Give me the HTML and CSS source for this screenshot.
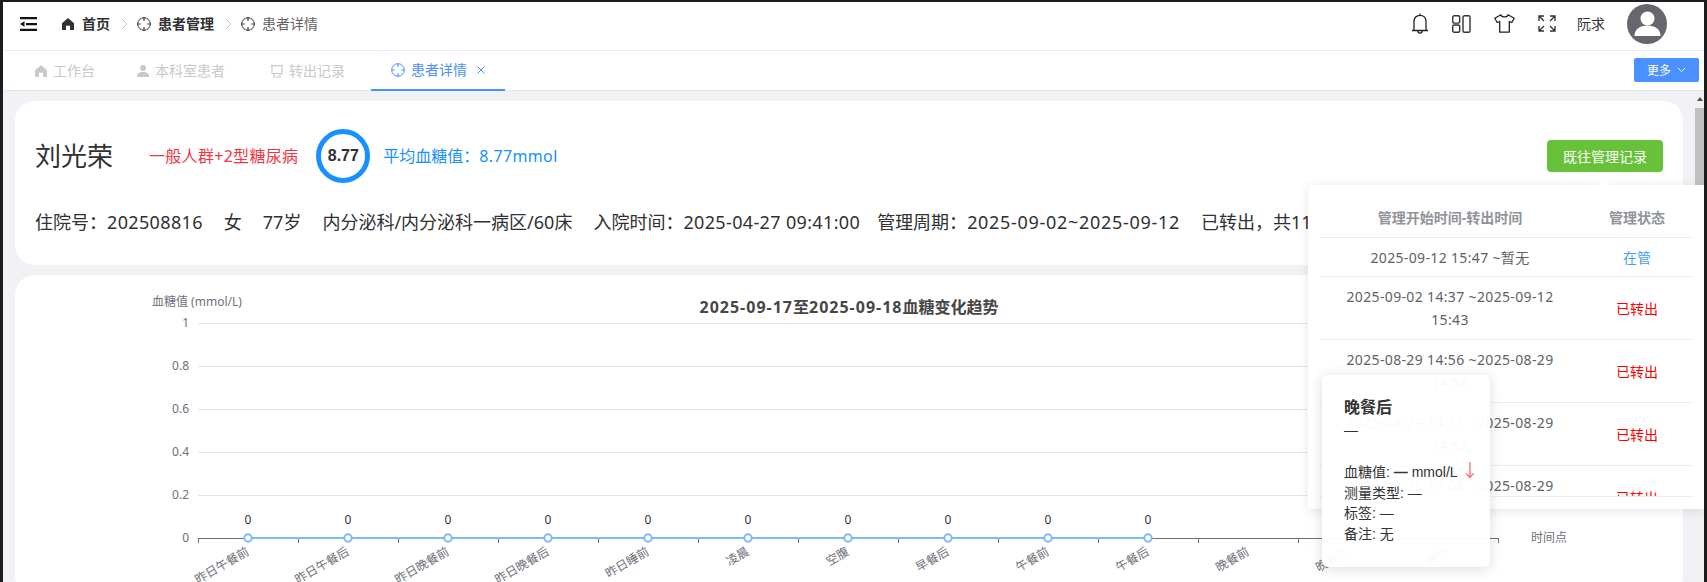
FILE: index.html
```html
<!DOCTYPE html>
<html lang="zh-CN">
<head>
    <meta charset="UTF-8">
    <title>患者详情</title>
    <link rel="stylesheet" href="styles.css">
</head>
<body>
<svg class="defs" width="0" height="0">
    <symbol id="i-target" viewBox="0 0 14 14">
        <circle cx="7" cy="7" r="6.3" fill="none" stroke="currentColor" stroke-width="1"/>
        <path d="M7 .7v3M7 10.3v3M.7 7h3M10.3 7h3" fill="none" stroke="currentColor" stroke-width="1.2"/>
    </symbol>
    <symbol id="i-home" viewBox="0 0 12 12">
        <path d="M6 0 12 5.2V12H8V7.8H4V12H0V5.2Z" fill="currentColor"/>
    </symbol>
    <symbol id="i-user" viewBox="0 0 12 12">
        <circle cx="6" cy="3" r="3" fill="currentColor"/>
        <path d="M0 12c0-3.4 2-5 6-5s6 1.600 6 5Z" fill="currentColor"/>
    </symbol>
    <symbol id="i-cart" viewBox="0 0 12 13">
        <path d="M0 .6h12M1 .6V8.500h10V.6M3 8.500v2.500M9 8.500v2.500M2 12h8" fill="none" stroke="currentColor" stroke-width="1.200"/>
    </symbol>
</svg>
<div class="app">
    <div class="topbar">
        <svg class="hamburger" width="17" height="14" viewBox="0 0 17 14">
            <path d="M0 0h17v2.200H0zM6 6h11v2.200H6zM0 11.800h17V14H0zM4.500 4.300v5.400L0 7z" fill="#111"/>
        </svg>
        <div class="crumbs">
            <svg class="crumb-icon home" width="12" height="12"><use href="#i-home"/></svg>
            <span class="crumb strong">首页</span>
            <svg class="chevron" width="7" height="12" viewBox="0 0 7 12"><path d="M1 1l5 5-5 5" fill="none" stroke="#c0c4cc" stroke-width="1"/></svg>
            <svg class="crumb-icon" width="14" height="14"><use href="#i-target"/></svg>
            <span class="crumb strong">患者管理</span>
            <svg class="chevron" width="7" height="12" viewBox="0 0 7 12"><path d="M1 1l5 5-5 5" fill="none" stroke="#c0c4cc" stroke-width="1"/></svg>
            <svg class="crumb-icon" width="14" height="14"><use href="#i-target"/></svg>
            <span class="crumb">患者详情</span>
        </div>
        <div class="tools">
            <svg class="tool bell" width="18" height="21" viewBox="0 0 18 21">
                <path d="M1 17.500h16M3 17.500V8.500C3 4.800 5.500 2.300 9 2.300s6 2.500 6 6.200v9M9 .5v1.800M6.800 17.800c0 3 4.400 3 4.400 0" fill="none" stroke="#222" stroke-width="1.300"/>
            </svg>
            <svg class="tool grid" width="19" height="18" viewBox="0 0 19 18">
                <g fill="none" stroke="#333" stroke-width="1.400"><rect x=".7" y=".7" width="7" height="7.400" rx="1.500"/><rect x=".7" y="10" width="7" height="7.300" rx="1.500"/><rect x="11" y=".7" width="7" height="16.600" rx="1.500"/></g>
            </svg>
            <svg class="tool shirt" width="21" height="19" viewBox="0 0 21 19">
                <path d="M7 .8 .8 4.200l2.400 4.300 2.500-1V18.200h9.600V7.500l2.500 1 2.400-4.300L14 .8c-.6 2.800-6.400 2.800-7 0Z" fill="none" stroke="#222" stroke-width="1.300" stroke-linejoin="round"/>
            </svg>
            <svg class="tool full" width="18" height="17" viewBox="0 0 18 17">
                <path d="M1 6V1h5M1 1l5 5M12 1h5v5M17 1l-5 5M1 11v5h5M1 16l5-5M17 11v5h-5M17 16l-5-5" fill="none" stroke="#333" stroke-width="1.300"/>
            </svg>
            <span class="username">阮求</span>
            <svg class="avatar" width="40" height="40" viewBox="0 0 40 40">
                <circle cx="20" cy="20" r="20" fill="#65676c"/>
                <circle cx="20.500" cy="14.500" r="7" fill="#fff"/>
                <path d="M7.500 32c0-7 5.500-10.500 13-10.500s13 3.500 13 10.500Z" fill="#fff"/>
            </svg>
        </div>
    </div>
    <div class="tabbar">
        <div class="tab">
            <svg width="12" height="12"><use href="#i-home"/></svg>
            <span>工作台</span>
        </div>
        <div class="tab">
            <svg width="12" height="12"><use href="#i-user"/></svg>
            <span>本科室患者</span>
        </div>
        <div class="tab tab-spaced">
            <svg width="12" height="13"><use href="#i-cart"/></svg>
            <span>转出记录</span>
        </div>
        <div class="tab tab-spaced active">
            <svg width="14" height="14"><use href="#i-target"/></svg>
            <span>患者详情</span>
            <svg class="tab-close" width="8" height="8" viewBox="0 0 8 8"><path d="M.5.5l7 7M7.500.5l-7 7" fill="none" stroke="currentColor" stroke-width="1"/></svg>
        </div>
        <div class="more">更多
            <svg width="9" height="6" viewBox="0 0 9 6"><path d="M.7.8l3.800 3.800L8.300.8" fill="none" stroke="#fff" stroke-width="1"/></svg>
        </div>
    </div>
    <div class="main">
        <div class="content">
            <div class="card card-patient">
                <div class="patient-top">
                    <div class="patient-name">刘光荣</div>
                    <div class="patient-tag">一般人群+2型糖尿病</div>
                    <div class="ring">8.77</div>
                    <div class="avg">平均血糖值&#65306;<span class="num">8.77mmol</span></div>
                    <div class="btn-green">既往管理记录</div>
                </div>
                <div class="patient-info">
                    <span>住院号&#65306;<span class="num">202508816</span></span>
                    <span>女</span>
                    <span>77岁</span>
                    <span>内分泌科/内分泌科一病区/60床</span>
                    <span>入院时间&#65306;<span class="num">2025-04-27 09:41:00</span></span>
                    <span class="tight">管理周期&#65306;<span class="num wide">2025-09-02~2025-09-12</span></span>
                    <span>已转出&#65292;共11次</span>
                </div>
            </div>
            <div class="card card-chart">
                <svg class="chart" width="1668" height="320" viewBox="15 275 1668 320">
                    <text class="chart-title" x="849" y="313" text-anchor="middle"><tspan class="chart-date">2025-09-17</tspan>至<tspan class="chart-date">2025-09-18</tspan>血糖变化趋势</text>
                    <text class="axis-text" x="152" y="306">血糖值 (mmol/L)</text>
                    <g stroke="#e0e6f1" stroke-width="1">
                        <path d="M198 323.500H1500M198 366.500H1500M198 409.500H1500M198 452.500H1500M198 495.500H1500"/>
                    </g>
                    <g class="axis-text" text-anchor="end">
                        <text x="189" y="327">1</text>
                        <text x="189" y="370">0.8</text>
                        <text x="189" y="413">0.6</text>
                        <text x="189" y="456">0.4</text>
                        <text x="189" y="499">0.2</text>
                        <text x="189" y="542">0</text>
                    </g>
                    <path d="M198 538.500H1498M198.500 538V543M298.500 538V543M398.500 538V543M498.500 538V543M598.500 538V543M698.500 538V543M798.500 538V543M898.500 538V543M998.500 538V543M1098.500 538V543M1198.500 538V543M1298.500 538V543M1398.500 538V543M1498.500 538V543" stroke="#6e7079" fill="none"/>
                    <path d="M248 538H1148" stroke="#7cb9ff" stroke-width="2"/>
                    <g fill="#fff" stroke="#7cb9ff" stroke-width="2">
                        <circle cx="248" cy="538" r="3.700"/><circle cx="348" cy="538" r="3.700"/><circle cx="448" cy="538" r="3.700"/><circle cx="548" cy="538" r="3.700"/><circle cx="648" cy="538" r="3.700"/>
                        <circle cx="748" cy="538" r="3.700"/><circle cx="848" cy="538" r="3.700"/><circle cx="948" cy="538" r="3.700"/><circle cx="1048" cy="538" r="3.700"/><circle cx="1148" cy="538" r="3.700"/>
                    </g>
                    <g class="value-text" text-anchor="middle">
                        <text x="248" y="524">0</text><text x="348" y="524">0</text><text x="448" y="524">0</text><text x="548" y="524">0</text><text x="648" y="524">0</text>
                        <text x="748" y="524">0</text><text x="848" y="524">0</text><text x="948" y="524">0</text><text x="1048" y="524">0</text><text x="1148" y="524">0</text>
                    </g>
                    <g class="axis-text" text-anchor="end">
                        <text transform="translate(250 554) rotate(-30)">昨日午餐前</text>
                        <text transform="translate(350 554) rotate(-30)">昨日午餐后</text>
                        <text transform="translate(450 554) rotate(-30)">昨日晚餐前</text>
                        <text transform="translate(550 554) rotate(-30)">昨日晚餐后</text>
                        <text transform="translate(650 554) rotate(-30)">昨日睡前</text>
                        <text transform="translate(750 554) rotate(-30)">凌晨</text>
                        <text transform="translate(850 554) rotate(-30)">空腹</text>
                        <text transform="translate(950 554) rotate(-30)">早餐后</text>
                        <text transform="translate(1050 554) rotate(-30)">午餐前</text>
                        <text transform="translate(1150 554) rotate(-30)">午餐后</text>
                        <text transform="translate(1250 554) rotate(-30)">晚餐前</text>
                        <text transform="translate(1350 554) rotate(-30)">晚餐后</text>
                        <text transform="translate(1450 554) rotate(-30)">睡前</text>
                    </g>
                    <text class="axis-text" x="1531" y="542">时间点</text>
                </svg>
            </div>
        </div>
        <div class="scrollbar">
            <div class="scroll-arrow"></div>
            <div class="scroll-thumb"></div>
        </div>

        <div class="records">
            <div class="records-arrow"></div>
            <div class="rec-row rec-head">
                <div class="rec-time">管理开始时间-转出时间</div>
                <div class="rec-state">管理状态</div>
            </div>
            <div class="rec-body">
                <div class="rec-row rec-first">
                    <div class="rec-time">2025-09-12 15:47 ~暂无</div>
                    <div class="rec-state on">在管</div>
                </div>
                <div class="rec-row">
                    <div class="rec-time">2025-09-02 14:37 ~2025-09-12 15:43</div>
                    <div class="rec-state off">已转出</div>
                </div>
                <div class="rec-row">
                    <div class="rec-time">2025-08-29 14:56 ~2025-08-29 14:56</div>
                    <div class="rec-state off">已转出</div>
                </div>
                <div class="rec-row">
                    <div class="rec-time">2025-08-29 14:55 ~2025-08-29 14:56</div>
                    <div class="rec-state off">已转出</div>
                </div>
                <div class="rec-row">
                    <div class="rec-time">2025-08-26 17:08 ~2025-08-29 14:55</div>
                    <div class="rec-state off">已转出</div>
                </div>
            </div>
        </div>

        <div class="tip">
            <div class="tip-title">晚餐后</div>
            <div class="tip-sub">—</div>
            <div class="tip-line">血糖值: <b>—</b> mmol/L <span class="tip-arrow">↓</span></div>
            <div class="tip-line">测量类型: —</div>
            <div class="tip-line">标签: —</div>
            <div class="tip-line">备注: 无</div>
        </div>
    </div>
</div>
</body>
</html>
```

FILE: styles.css
```css
* {
    box-sizing: border-box;
}

html, body {
    height: 100%;
    margin: 0;
}

body {
    padding: 2px 3px 0;
    background: #1d1d1f;
    font-family: "Noto Sans", "Noto Sans CJK SC", sans-serif;
    font-size: 14px;
    color: #303133;
    overflow: hidden;
}

svg {
    flex: none;
    display: block;
}

.defs {
    position: absolute;
}

.app {
    height: 100%;
    display: flex;
    flex-direction: column;
    background: #fff;
}

/* top bar */
.topbar {
    height: 49px;
    flex: none;
    padding: 0 0 5px 17px;
    display: flex;
    align-items: center;
    border-bottom: 1px solid #ebeef2;
}

.hamburger {
    margin-right: 25px;
}

.crumbs {
    display: flex;
    align-items: center;
    color: #303133;
    line-height: 20px;
}

.crumb-icon.home {
    margin-right: 8px;
}

.crumb-icon {
    margin-right: 7px;
}

.crumb {
    color: #606266;
}

.crumb.strong {
    color: #303133;
    font-weight: 700;
}

.chevron {
    margin: 0 9px 0 11px;
}

.tools {
    margin-left: auto;
    padding-right: 37px;
    display: flex;
    align-items: center;
}

.tool {
    margin-right: 23px;
}

.tool.full {
    margin-right: 21px;
}

.username {
    margin-right: 22px;
    line-height: 20px;
    color: #303133;
}

/* tabs */
.tabbar {
    height: 40px;
    flex: none;
    padding-left: 12px;
    display: flex;
    align-items: stretch;
    border-bottom: 1px solid #e4e7ed;
}

.tab {
    height: 40px;
    padding: 0 22px 0 20px;
    display: flex;
    align-items: center;
    gap: 6px;
    color: #c8c9cc;
    line-height: 20px;
}

.tab-spaced {
    margin-left: 4px;
}

.tab.active {
    padding-right: 20px;
    color: #4a90ff;
    border-bottom: 2px solid #4a90ff;
}

.tab-close {
    margin-left: 4px;
}

.more {
    width: 65px;
    height: 24px;
    margin: 7px 5px 0 auto;
    display: flex;
    align-items: center;
    justify-content: center;
    gap: 6px;
    background: #4a90ff;
    border-radius: 2px;
    color: #fff;
    font-size: 12px;
}

/* main */
.main {
    flex: 1;
    min-height: 0;
    position: relative;
    display: flex;
    background: #f0f2f5;
}

.content {
    flex: 1;
    min-width: 0;
    padding: 10px 12px 0;
    overflow: hidden;
}

.scrollbar {
    width: 9px;
    flex: none;
    background: #f1f1f1;
}

.scroll-arrow {
    height: 17px;
    position: relative;
}

.scroll-arrow::after {
    content: "";
    position: absolute;
    top: 6px;
    left: 2px;
    border: 3px solid transparent;
    border-bottom: 4px solid #505050;
    border-top: none;
}

.scroll-thumb {
    height: 170px;
    background: #c1c1c1;
}

.card {
    background: #fff;
    border-radius: 20px;
}

.card-patient {
    height: 164px;
    padding: 28px 20px 0 20px;
}

.card-chart {
    height: 320px;
    margin-top: 10px;
}

.patient-top {
    height: 54px;
    display: flex;
    align-items: center;
}

.patient-name {
    margin-right: 36px;
    font-size: 26px;
    line-height: 36px;
    color: #303133;
}

.patient-tag {
    margin-right: 18px;
    font-size: 16px;
    line-height: 24px;
    letter-spacing: 0.3px;
    color: #f5333f;
}

.ring {
    width: 54px;
    height: 54px;
    margin-right: 13px;
    display: flex;
    align-items: center;
    justify-content: center;
    border: 5px solid #1890ff;
    border-radius: 50%;
    font-family: "Liberation Sans", sans-serif;
    font-size: 16px;
    font-weight: 700;
    color: #303133;
}

.avg {
    font-size: 16px;
    line-height: 24px;
    color: #1890ff;
}

.btn-green {
    width: 116px;
    height: 32px;
    margin-left: auto;
    display: flex;
    align-items: center;
    justify-content: center;
    background: #67c23a;
    border-radius: 4px;
    color: #fff;
    font-size: 14px;
}

.patient-info {
    height: 24px;
    margin-top: 27px;
    display: flex;
    gap: 21px;
    font-size: 18px;
    line-height: 24px;
    color: #303133;
    white-space: nowrap;
}

.patient-info .tight {
    margin-left: -4px;
}

.num {
    letter-spacing: 0.35px;
}

.num.wide {
    letter-spacing: 0.7px;
}

/* chart */
.chart-title {
    font-size: 16px;
    font-weight: 700;
    fill: #464646;
}

.chart-date {
    letter-spacing: 1px;
}

.axis-text {
    font-size: 12px;
    fill: #6e7079;
}

.value-text {
    font-size: 12px;
    fill: #333;
}

/* records dropdown */
.records {
    position: absolute;
    left: 1305px;
    right: 0;
    top: 94px;
    height: 324px;
    padding: 0 10px 0 12px;
    background: #fff;
    border-radius: 4px 0 0 4px;
    box-shadow: 0 2px 12px rgba(0, 0, 0, 0.1);
    font-size: 14px;
}

.records-arrow {
    position: absolute;
    left: 291px;
    top: -5px;
    width: 0;
    height: 0;
    border: 6px solid transparent;
    border-top: none;
    border-bottom: 5px solid #fff;
}

.rec-row {
    min-height: 63px;
    display: flex;
    align-items: center;
    border-bottom: 1px solid #ebeef5;
    line-height: 23px;
    text-align: center;
    color: #606266;
}

.rec-head {
    min-height: 0;
    height: 53px;
    padding-top: 12px;
    font-weight: 700;
    color: #909399;
}

.rec-first {
    min-height: 39px;
}

.rec-time {
    width: 260px;
    padding: 0 22px;
    flex: none;
}

.rec-body .rec-time {
    letter-spacing: 0.35px;
}

.rec-state {
    flex: 1;
}

.rec-state.on {
    color: #409eff;
}

.rec-state.off {
    color: #f00;
}

.rec-body {
    height: 259px;
    overflow: hidden;
    border-bottom: 1px solid #ebeef5;
}

/* tooltip */
.tip {
    position: absolute;
    left: 1319px;
    top: 284px;
    width: 168px;
    height: 192px;
    padding: 21px 22px 0;
    background: rgba(255, 255, 255, 0.96);
    border-radius: 6px;
    box-shadow: 0 2px 14px rgba(0, 0, 0, 0.14);
    font-family: "Liberation Sans", "Noto Sans CJK SC", sans-serif;
    font-size: 14px;
    color: #333;
}

.tip-title {
    font-size: 16px;
    font-weight: 700;
    line-height: 24px;
}

.tip-sub {
    height: 42px;
    line-height: 20px;
}

.tip-line {
    height: 20.6px;
    line-height: 20.6px;
    white-space: nowrap;
}

.tip-arrow {
    font-family: "Noto Sans CJK SC", sans-serif;
    font-size: 18px;
    line-height: 0;
    color: #ff6b6b;
}
```
